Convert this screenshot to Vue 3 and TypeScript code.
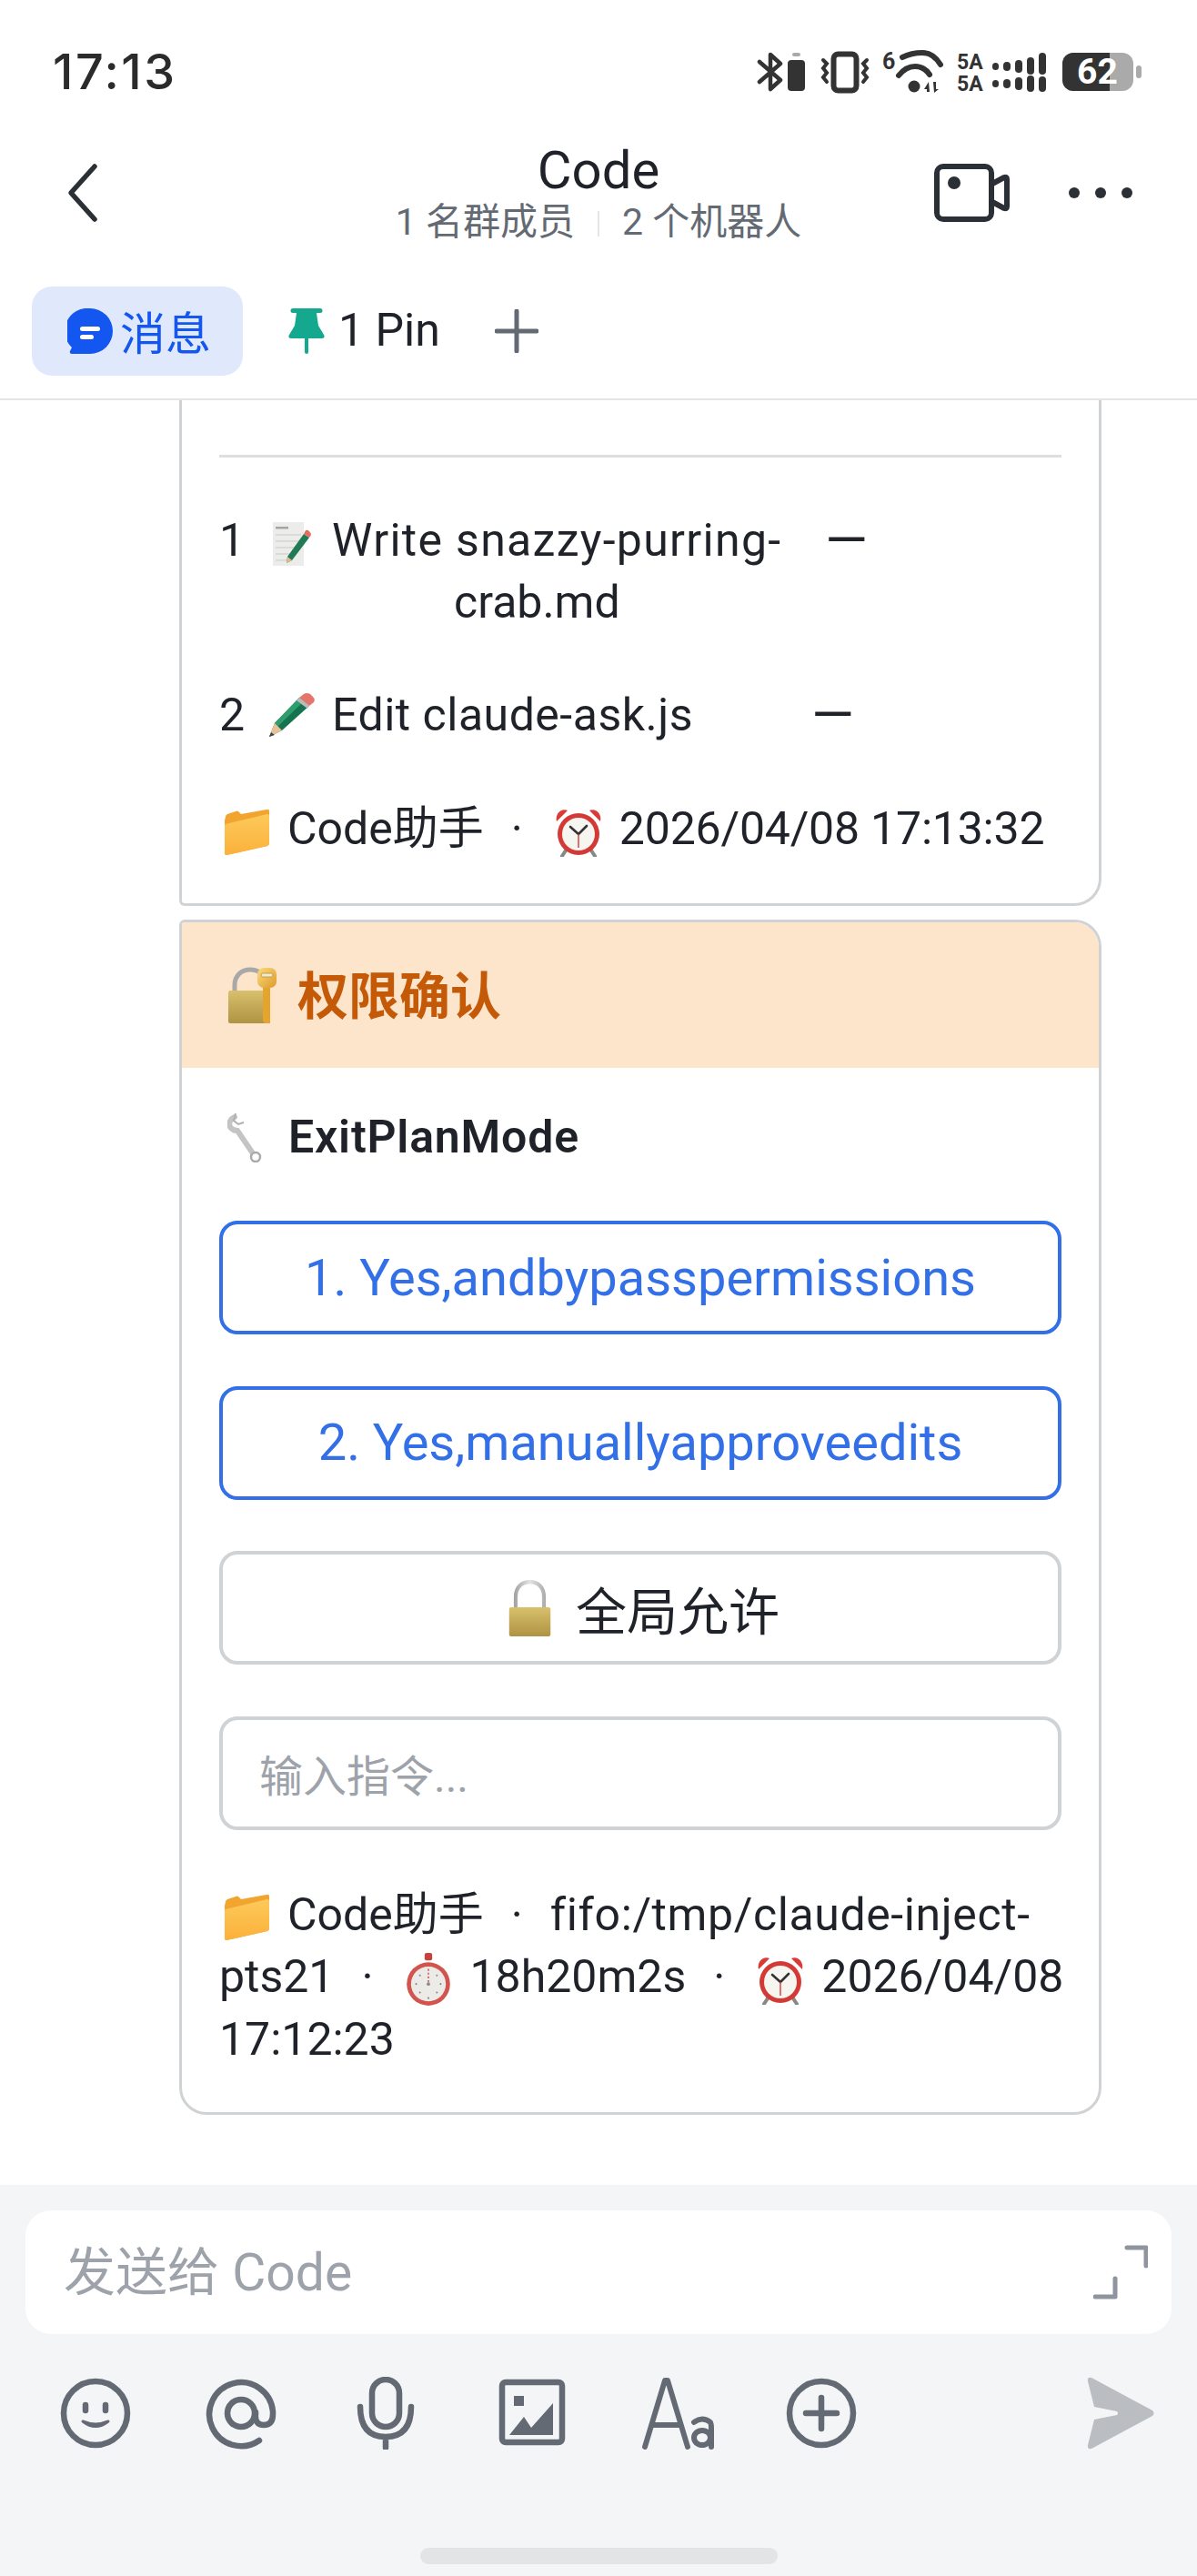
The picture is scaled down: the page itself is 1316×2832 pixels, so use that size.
<script setup lang="ts">
const tools = ['smile', 'at', 'mic', 'image', 'aa', 'plus']
</script>

<template>
  <div class="phone">
    <svg class="defs" width="0" height="0" aria-hidden="true">
      <defs>
        <linearGradient id="gold" x1="0" y1="0" x2="0" y2="1"><stop offset="0" stop-color="#d8c06c"/><stop offset="1" stop-color="#ae9343"/></linearGradient>
        <linearGradient id="silver" gradientUnits="userSpaceOnUse" x1="0" y1="0" x2="44" y2="0"><stop offset="0" stop-color="#8d8d8d"/><stop offset=".5" stop-color="#e2e2e2"/><stop offset="1" stop-color="#9a9a9a"/></linearGradient>
        <linearGradient id="fold" x1="0" y1="0" x2="0" y2="1"><stop offset="0" stop-color="#fdc95a"/><stop offset="1" stop-color="#fbb13a"/></linearGradient>
        <linearGradient id="keyg" x1="0" y1="0" x2="1" y2="1"><stop offset="0" stop-color="#fbdc7c"/><stop offset="1" stop-color="#dd9a2b"/></linearGradient>
      </defs>
      <symbol id="e-folder" viewBox="0 0 51 50">
        <path d="M1 12 2 8q0-2 2-3L13 2q2-1 3 0l3 3 28-5q3-1 3 2v35q0 2-2 3L3 50q-2 0-2-2z" fill="#f2a52e"/>
        <path d="M2 16 48 5q2 0 2 2v30q0 2-2 3L3 50q-2 0-2-2V18q0-2 1-2z" fill="url(#fold)"/>
      </symbol>
      <symbol id="e-alarm" viewBox="0 0 54 54">
        <path d="M3 15C1 7 8 0 15 3z M51 15c2-8-5-15-12-12z" fill="#d93b36"/>
        <path d="M13 47l-4 6M41 47l4 6" stroke="#888" stroke-width="4" stroke-linecap="round"/>
        <circle cx="27" cy="29" r="23" fill="#d33a35"/>
        <circle cx="27" cy="29" r="18" fill="#f7f5f0"/>
        <path d="M27 29 18 21M27 29 36 20" stroke="#333" stroke-width="2.6" stroke-linecap="round"/>
        <path d="M27 29v15" stroke="#d33a35" stroke-width="1.4"/>
      </symbol>
      <symbol id="e-stop" viewBox="0 0 48 58">
        <rect x="20" y="0" width="8" height="8" rx="2" fill="#c9413c"/>
        <circle cx="24" cy="33" r="23" fill="#d2544e"/>
        <circle cx="24" cy="33" r="18.500" fill="#ecebe7"/>
        <path d="M24 17v16" stroke="#d2544e" stroke-width="1.500" stroke-dasharray="2 2"/>
        <circle cx="24" cy="33" r="1.800" fill="#888"/>
        <g fill="#888"><circle cx="24" cy="48" r="1"/><circle cx="11" cy="33" r="1"/><circle cx="37" cy="33" r="1"/><circle cx="15" cy="24" r="1"/><circle cx="33" cy="24" r="1"/><circle cx="15" cy="42" r="1"/><circle cx="33" cy="42" r="1"/></g>
      </symbol>
      <symbol id="e-memo" viewBox="0 0 42 48">
        <rect x="0" y="0" width="34" height="48" fill="#ececea"/>
        <rect x="3" y="5" width="14" height="2.500" fill="#a5a5a5"/>
        <path d="M3 14h28M3 21h26M3 28h22M3 35h16M3 42h12" stroke="#c9c9c9" stroke-width="1"/>
        <path d="M34 13 40 17 21 42 15 45 16 38z" fill="#1f7a55"/>
        <path d="M34 13l2-4q2-1 4 1l2 3q0 2-2 4z" fill="#e06f5e"/>
        <path d="M16 38l5 4-6 3z" fill="#e5b98d"/>
      </symbol>
      <symbol id="e-pencil" viewBox="0 0 54 50">
        <path d="M36 6 47 15 17 42 3 49 9 34z" fill="#15734f"/>
        <path d="M36 6 41 10 12 38 9 34z" fill="#2f9e6f"/>
        <path d="M36 6l5-4q3-2 7 0l3 3q3 3 1 6l-5 4z" fill="#e4746c"/>
        <path d="M36 6 47 15l-2 3L33 9z" fill="#bbb"/>
        <path d="M9 34l8 8-14 7z" fill="#e8c196"/>
        <path d="M5 44l4 3-6 2z" fill="#444"/>
      </symbol>
      <symbol id="e-lockkey" viewBox="0 0 54 62">
        <path d="M7 28V20C7 9 15 3 24 3s16 5 17 12" fill="none" stroke="#a8a8a8" stroke-width="5"/>
        <rect x="0" y="26" width="44" height="36" rx="2" fill="url(#gold)"/>
        <path d="M38 20h8v42h-6l-2-3z" fill="#e4a42e"/>
        <rect x="32" y="1" width="21" height="22" rx="7" fill="url(#keyg)"/>
        <rect x="36" y="7" width="13" height="4" rx="2" fill="#efe9d5" stroke="#b98a2a" stroke-width=".7"/>
      </symbol>
      <symbol id="e-lock" viewBox="0 0 44 60">
        <path d="M7 32V18C7 8 13 2 22 2s15 6 15 16v14" fill="none" stroke="url(#silver)" stroke-width="4"/>
        <rect x="0" y="29" width="44" height="31" rx="2" fill="url(#gold)"/>
      </symbol>
      <symbol id="e-wrench" viewBox="0 0 38 56">
        <path d="M8 6 C3 8 1 13 3 17c2 3 5 4 8 4L28 46" fill="none" stroke="#c4c4c4" stroke-width="6" stroke-linecap="round"/>
        <path d="M9 2 7 10l5 4 6-2" fill="none" stroke="#b0b0b0" stroke-width="2"/>
        <circle cx="31" cy="50" r="5" fill="#fff" stroke="#aaa" stroke-width="2.500"/>
      </symbol>
    </svg>

    <header class="top">
      <div class="status">
        <span class="clock">17:13</span>
        <div class="status-icons">
          <svg width="430" height="50" viewBox="832 55 430 50" aria-hidden="true">
            <g fill="none" stroke="#333" stroke-width="4.500" stroke-linejoin="round" stroke-linecap="round">
              <path d="M835 68 858 88 847 98V60l11 10-23 20"/>
            </g>
            <rect x="871" y="58" width="9" height="4" rx="2" fill="#aaa"/>
            <rect x="866" y="66" width="19" height="34" rx="4" fill="#333"/>
            <rect x="916.500" y="59.500" width="25" height="40" rx="5" fill="none" stroke="#333" stroke-width="6"/>
            <g fill="none" stroke="#333" stroke-width="4" stroke-linecap="round">
              <path d="M905 66l4 4-4 5 4 5-4 5 4 5"/>
              <path d="M953 66l-4 4 4 5-4 5 4 5-4 5"/>
              <path d="M992 63q10-5 22-5 12 0 20 13" stroke-width="6"/>
              <path d="M988 83q8-10 18-10 10 0 16 9" stroke-width="6"/>
            </g>
            <circle cx="1005" cy="95" r="6.500" fill="#333"/>
            <path d="M1021 90l-5 8h3v3h3zM1026 90h3v8h3l-5 4z" fill="#333"/>
            <g fill="#333">
              <rect x="1091" y="69" width="7" height="8" rx="3.500"/><rect x="1103" y="68" width="8" height="10" rx="4"/><rect x="1116" y="66" width="8" height="14" rx="4"/><rect x="1129" y="63" width="8" height="19" rx="4"/><rect x="1142" y="58" width="8" height="24" rx="4"/>
              <rect x="1091" y="88" width="7" height="8" rx="3.500"/><rect x="1103" y="87" width="8" height="10" rx="4"/><rect x="1116" y="85" width="8" height="14" rx="4"/><rect x="1129" y="83" width="8" height="18" rx="4"/><rect x="1142" y="84" width="8" height="17" rx="4"/>
            </g>
            <rect x="1168" y="58" width="78" height="42" rx="12" fill="#aaa"/>
            <path d="M1180 58h40v42h-40a12 12 0 0 1-12-12V70a12 12 0 0 1 12-12z" fill="#333"/>
            <rect x="1249" y="72" width="6" height="14" rx="3" fill="#aaa"/>
          </svg>
          <span class="st st-6">6</span>
          <span class="st st-a1">5A</span>
          <span class="st st-a2">5A</span>
          <span class="st st-b">62</span>
        </div>
      </div>

      <div class="nav">
        <svg class="nav-back" width="40" height="68" viewBox="0 0 40 68"><path d="M34 5 8 34l26 29" fill="none" stroke="#2b2f36" stroke-width="5.500" stroke-linecap="round" stroke-linejoin="round"/></svg>
        <div class="nav-title">
          <div class="title">Code</div>
          <div class="sub">1 名群成员<i class="sep"></i>2 个机器人</div>
        </div>
        <div class="nav-right">
          <svg width="84" height="64" viewBox="0 0 84 64"><rect x="3" y="3" width="60" height="58" rx="7" fill="none" stroke="#2b2f36" stroke-width="6"/><circle cx="22" cy="21" r="7" fill="#2b2f36"/><path d="M64 22l13-7q3-1 3 2v30q0 3-3 2l-13-7" fill="none" stroke="#2b2f36" stroke-width="6" stroke-linejoin="round"/></svg>
          <svg width="72" height="14" viewBox="0 0 72 14"><circle cx="7" cy="7" r="6" fill="#2b2f36"/><circle cx="36" cy="7" r="6" fill="#2b2f36"/><circle cx="65" cy="7" r="6" fill="#2b2f36"/></svg>
        </div>
      </div>

      <div class="tabs">
        <div class="tab-on">
          <svg width="50" height="50" viewBox="0 0 50 50"><path d="M25 0a25 25 0 0 1 0 50H5q-3 0-2-3l2-4A25 25 0 0 1 25 0z" fill="#1456f0"/><rect x="14" y="20" width="22" height="5" rx="2.500" fill="#fff"/><rect x="14" y="29" width="15" height="5" rx="2.500" fill="#fff"/></svg>
          <span>消息</span>
        </div>
        <div class="tab-pin">
          <svg width="40" height="50" viewBox="0 0 40 50"><path d="M5 0h30a2 2 0 0 1 0 5h-4l2 14 6 10q2 4-2 4H22v15a2 2 0 0 1-4 0V33H3q-4 0-2-4l6-10 2-14H5a2 2 0 0 1 0-5z" fill="#14a88e"/></svg>
          <span>1 Pin</span>
        </div>
        <svg class="tab-plus" width="48" height="48" viewBox="0 0 48 48"><path d="M24 2v44M2 24h44" stroke="#646a73" stroke-width="5" stroke-linecap="round"/></svg>
      </div>
    </header>

    <main class="list">
      <section class="card card-a">
        <div class="rule"></div>
        <div class="row row-1">
          <span class="num">1</span>
          <div class="cell-1">
            <div class="l1"><svg class="emo memo"><use href="#e-memo"/></svg><span>Write snazzy-purring-</span></div>
            <div class="l2">crab.md</div>
          </div>
          <span class="dash">—</span>
        </div>
        <div class="row row-2">
          <span class="num">2</span>
          <svg class="emo pencil"><use href="#e-pencil"/></svg>
          <span class="edit">Edit claude-ask.js</span>
          <span class="dash">—</span>
        </div>
        <p class="foot foot-a"><svg class="emo folder"><use href="#e-folder"/></svg>Code助手<span class="dot">·</span><svg class="emo alarm"><use href="#e-alarm"/></svg><span class="stamp">2026/04/08 17:13:32</span></p>
      </section>

      <section class="card card-b">
        <div class="card-head"><svg class="emo lockkey"><use href="#e-lockkey"/></svg><span>权限确认</span></div>
        <div class="card-body">
          <div class="tool"><svg class="emo wrench"><use href="#e-wrench"/></svg>ExitPlanMode</div>
          <div class="btn btn-blue">1. Yes,andbypasspermissions</div>
          <div class="btn btn-blue">2. Yes,manuallyapproveedits</div>
          <div class="btn btn-all"><svg class="emo lock"><use href="#e-lock"/></svg>全局允许</div>
          <div class="field">输入指令...</div>
          <div class="foot foot-b">
            <div class="line"><svg class="emo folder"><use href="#e-folder"/></svg><span>Code助手</span><span class="dot">·</span><span class="fifo">fifo:/tmp/claude-inject-</span></div>
            <div class="line"><span>pts21</span><span class="dot">·</span><svg class="emo stop"><use href="#e-stop"/></svg><span>18h20m2s</span><span class="dot">·</span><svg class="emo alarm"><use href="#e-alarm"/></svg><span>2026/04/08</span></div>
            <div class="line"><span>17:12:23</span></div>
          </div>
        </div>
      </section>
    </main>

    <footer class="bar">
      <div class="compose">
        <span>发送给 Code</span>
        <svg width="60" height="60" viewBox="0 0 60 60"><path d="M37 3h21v20M24 37v20H2" fill="none" stroke="#8f959e" stroke-width="5" stroke-linecap="round" stroke-linejoin="round"/></svg>
      </div>
      <div class="tools">
        <template v-for="t in tools" :key="t">
          <svg class="tool-i" width="88" height="80" viewBox="0 0 88 80" fill="none" stroke="#646a73" stroke-width="6.500" stroke-linecap="round" stroke-linejoin="round">
            <g v-if="t === 'smile'">
              <circle cx="44" cy="40" r="35"/>
              <path d="M33 31v6M55 31v6"/>
              <path d="M30 49q14 11 28 0q-14 6-28 0z" fill="#646a73" stroke-width="3"/>
            </g>
            <g v-else-if="t === 'at'">
              <path d="M64 70A35 35 0 1 1 79 38v3q0 12-10 12t-9-12V39"/>
              <circle cx="44" cy="40" r="15"/>
            </g>
            <g v-else-if="t === 'mic'">
              <rect x="29" y="3" width="30" height="52" rx="15"/>
              <path d="M16 33q0 33 28 33t28-33M44 66v12"/>
            </g>
            <g v-else-if="t === 'image'">
              <rect x="12" y="6" width="66" height="66" rx="4"/>
              <rect x="25" y="21" width="11" height="11" fill="#646a73" stroke="none"/>
              <path d="M20 64 36 44l8 12 24-27v35z" fill="#646a73" stroke="none"/>
            </g>
            <g v-else-if="t === 'aa'">
              <path d="M10 77 32 4h3l22 73M18 53h31" stroke-width="6"/>
              <ellipse cx="73" cy="67" rx="9" ry="8" stroke-width="6"/><path d="M64 50q9-7 18 0 1 2 1 6v21" stroke-width="6"/>
            </g>
            <g v-else>
              <circle cx="44" cy="40" r="35"/>
              <path d="M44 23v34M27 40h34"/>
            </g>
          </svg>
        </template>
        <svg class="send" width="76" height="80" viewBox="0 0 76 80"><path d="M5 1 72 37q3 3 0 6L5 79q-5 1-4-4l7-28 25-5q2-2 0-4L8 33 1 5Q0 0 5 1z" fill="#babdc1"/></svg>
      </div>
      <div class="home"></div>
    </footer>
  </div>
</template>

<style scoped>
* { box-sizing: border-box; }
.phone {
  width: 1316px; height: 2832px; display: flex; flex-direction: column;
  background: #fff; color: #1f2329; overflow: hidden;
  font-family: Roboto, "Noto Sans CJK SC", sans-serif; font-size: 50px;
}
.defs { display: block; }
.top { height: 440px; flex: none; border-bottom: 2px solid #e4e5e7; }
.status { height: 136px; padding: 24px 54px 0 58px; display: flex; justify-content: space-between; align-items: center; }
.clock { font-family: Inter, sans-serif; font-weight: 500; font-size: 54px; letter-spacing: 2.500px; color: #2b2b2b; margin-top: -4px; }
.status-icons { position: relative; width: 430px; height: 50px; }
.status-icons svg { display: block; }
.st { position: absolute; font-family: Roboto, sans-serif; font-weight: 700; color: #333; line-height: 1; }
.st-6 { left: 138px; top: 0; font-size: 25px; }
.st-a1 { left: 220px; top: 2px; font-size: 23px; }
.st-a2 { left: 220px; top: 26px; font-size: 23px; }
.st-b { left: 352px; top: 5px; font-size: 39px; color: #fff; }
.nav { height: 152px; display: grid; grid-template-columns: 1fr auto 1fr; align-items: center; padding: 0 70px; }
.nav-title { text-align: center; }
.title { font-size: 58px; color: #1f2329; line-height: 64px; }
.sub { font-size: 41px; color: #646a73; line-height: 50px; white-space: nowrap; }
.sep { display: inline-block; width: 2px; height: 28px; background: #e4e5e7; margin: 0 25px; vertical-align: -2px; }
.nav-right { display: flex; align-items: center; justify-content: flex-end; gap: 63px; }
.tabs { display: flex; align-items: center; padding: 0 0 0 35px; height: 98px; margin-top: 27px; }
.tab-on { width: 232px; height: 98px; background: #e0e9fb; border-radius: 22px; display: flex; align-items: center; gap: 8px; padding-left: 39px; color: #1456f0; }
.tab-on span, .tab-pin span { margin-top: -2px; }
.tab-pin { display: flex; align-items: center; gap: 15px; margin-left: 50px; }
.tab-plus { margin-left: 60px; }

.list { flex: 1; min-height: 0; padding-left: 197px; width: 1211px; box-sizing: content-box; }
.card { width: 1014px; border: 3px solid #d0d3d6; background: #fff; }
.card-a { border-top: 0; border-radius: 0 0 30px 6px; padding: 60px 41px 0; height: 556px; }
.rule { height: 3px; background: #dedede; }
.row { display: flex; align-items: flex-start; line-height: 68px; }
.row-1 { margin-top: 57px; }
.row-2 { margin-top: 56px; }
.num { flex: none; width: 54px; }
.row-2 .num { width: 52px; }
.cell-1 { width: 575px; }
.l1 { padding-left: 5px; letter-spacing: 1.300px; white-space: nowrap; }
.l2 { padding-left: 204px; }
.dash { font-size: 60px; }
.row-1 .dash { margin-left: 37px; }
.edit { margin-left: 18px; letter-spacing: .5px; }
.row-2 .dash { margin-left: 130px; }
.emo { display: inline-block; vertical-align: middle; }
.memo { width: 42px; height: 48px; margin-right: 23px; }
.pencil { width: 54px; height: 50px; margin-top: 9px; flex: none; }
.folder { width: 51px; height: 50px; margin: 0 19px 0 5px; }
.alarm { width: 54px; height: 54px; margin: 0 18px 0 4px; }
.stop { width: 52px; height: 60px; margin: 0 20px 0 4px; }
.lockkey { width: 54px; height: 62px; margin-right: 22px; }
.lock { width: 47px; height: 62px; margin-right: 27px; }
.wrench { width: 38px; height: 56px; margin-right: 29px; }
.dot { margin: 0 30px; }
.stamp { letter-spacing: -.2px; }
.fifo { letter-spacing: .6px; }
.foot { margin: 0; line-height: 68.500px; }
.foot-a { margin-top: 57px; }
.line { white-space: nowrap; }

.card-b { margin-top: 15px; border-radius: 6px 30px 30px 30px; overflow: hidden; height: 1314px; }
.card-head { height: 160px; background: #fde5cb; padding-left: 51px; display: flex; align-items: center; font-size: 56px; font-weight: 700; color: #c45a08; }
.card-head span { margin-top: -8px; }
.card-body { padding: 0 41px; }
.tool { height: 152px; padding: 0 0 0 9px; display: flex; align-items: center; font-weight: 600; margin-bottom: 16px; letter-spacing: .8px; }
.btn { height: 125px; margin-bottom: 56.500px; border: 4px solid #d0d3d6; border-radius: 20px; display: flex; align-items: center; justify-content: center; font-size: 56px; }
.btn-blue { border-color: #3370e8; color: #3370e8; }
.btn-all { padding-left: 8px; }
.field { height: 125px; border: 4px solid #d0d3d6; border-radius: 20px; display: flex; align-items: center; padding-left: 40px; color: #9ea3ab; font-size: 48px; }
.foot-b { margin-top: 59px; }

.bar { height: 430px; flex: none; background: #f4f5f7; padding: 28px 28px 0; }
.compose { height: 136px; background: #fff; border-radius: 28px; display: flex; align-items: center; justify-content: space-between; padding: 0 26px 0 42px; font-size: 57px; color: #9ea3ab; }
.compose span { margin-top: -11px; }
.tools { display: flex; align-items: center; margin-top: 45px; padding-left: 33px; gap: 71.500px; height: 84px; }
.tool-i { flex: none; }
.send { margin-left: auto; margin-right: 17px; flex: none; }
.home { width: 393px; height: 18px; border-radius: 9px; background: #e3e4e5; margin: 106px auto 0 434px; }
</style>
